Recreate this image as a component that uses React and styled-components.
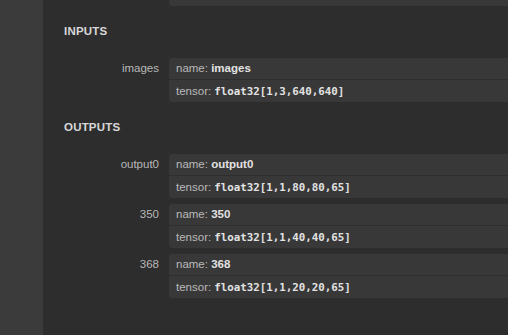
import React from 'react';
import styled, { createGlobalStyle } from 'styled-components';

const GlobalStyle = createGlobalStyle`
  html, body {
    margin: 0;
    padding: 0;
    background: #2d2d2d;
    overflow: hidden;
  }
`;

const inputs = [
  { label: 'images', name: 'images', type: 'float32[1,3,640,640]' },
];

const outputs = [
  { label: 'output0', name: 'output0', type: 'float32[1,1,80,80,65]' },
  { label: '350', name: '350', type: 'float32[1,1,40,40,65]' },
  { label: '368', name: '368', type: 'float32[1,1,20,20,65]' },
];

const Item = ({ label, name, type }) => (
  <ItemRow>
    <ItemName>{label}</ItemName>
    <ValueBox>
      <ValueLine $divider>
        name: <Strong>{name}</Strong>
      </ValueLine>
      <ValueLine>
        tensor: <Code>{type}</Code>
      </ValueLine>
    </ValueBox>
  </ItemRow>
);

const App = () => {
  return (
    <Page>
      <GlobalStyle />
      <Gutter />
      <Sidebar>
        <ItemRow>
          <ItemName />
          <ValueStub />
        </ItemRow>

        <SectionTitle>INPUTS</SectionTitle>
        {inputs.map(item => (
          <Item key={item.label} {...item} />
        ))}

        <SectionTitle>OUTPUTS</SectionTitle>
        {outputs.map(item => (
          <Item key={item.label} {...item} />
        ))}
      </Sidebar>
    </Page>
  );
};

export default App;

const Page = styled.div`
  display: flex;
  width: 508px;
  height: 335px;
  overflow: hidden;
  font-family: "Liberation Sans", "DejaVu Sans", sans-serif;
`;

const Gutter = styled.div`
  flex: 0 0 43px;
  background: #3b3b3b;
`;

const Sidebar = styled.div`
  flex: 0 0 520px;
  background: #2d2d2d;
  padding-left: 21px;
  box-sizing: border-box;
`;

const SectionTitle = styled.div`
  padding-top: 11px;
  margin-bottom: 19px;
  line-height: 16px;
  font-size: 11.5px;
  font-weight: bold;
  color: #d8d8d8;
  letter-spacing: 0.2px;
`;

const ItemRow = styled.div`
  display: flex;
  align-items: flex-start;
  margin-bottom: 6px;
`;

const ItemName = styled.div`
  flex: 0 0 95px;
  margin-right: 10px;
  text-align: right;
  font-size: 11.5px;
  line-height: 21px;
  color: #b8b8b8;
`;

const ValueBox = styled.div`
  flex: 1;
  background: #383838;
  border-radius: 3px;
`;

const ValueStub = styled.div`
  flex: 1;
  height: 6px;
  background: #383838;
  border-radius: 0 0 3px 3px;
`;

const ValueLine = styled.div`
  height: ${p => (p.$divider ? '21px' : '22px')};
  line-height: ${p => (p.$divider ? '21px' : '22px')};
  padding-left: 7px;
  font-size: 11.5px;
  color: #b8b8b8;
  white-space: nowrap;
  border-bottom: ${p => (p.$divider ? '1px solid #2e2e2e' : 'none')};
`;

const Strong = styled.b`
  color: #e2e2e2;
  font-weight: bold;
`;

const Code = styled.code`
  font-family: "DejaVu Sans Mono", "Liberation Mono", monospace;
  font-size: 10.8px;
  font-weight: bold;
  color: #e2e2e2;
`;
